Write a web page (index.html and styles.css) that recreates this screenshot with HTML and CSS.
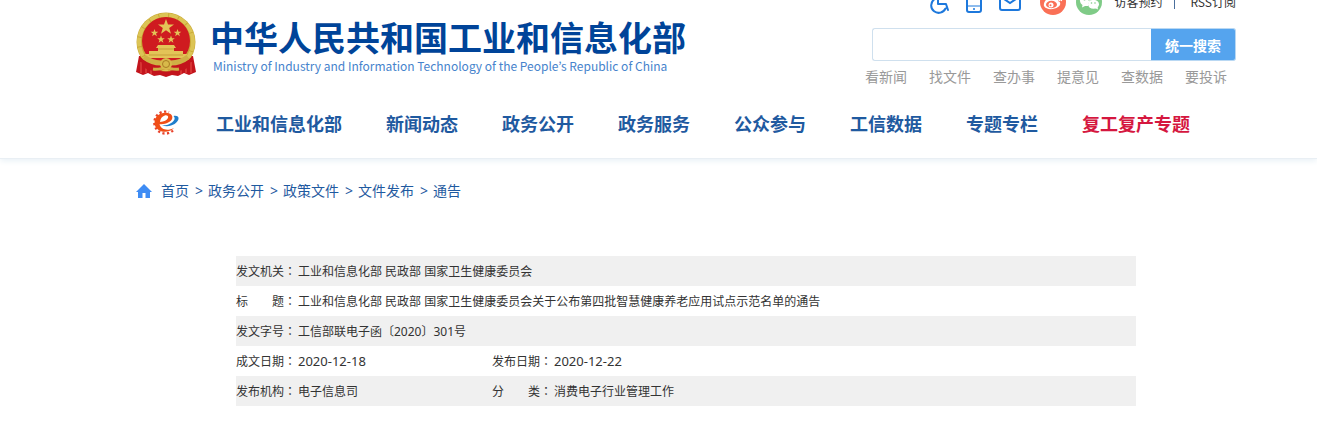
FILE: index.html
```html
<!DOCTYPE html>
<html lang="zh-CN">
<head>
<meta charset="utf-8">
<meta name="viewport" content="width=device-width, initial-scale=1">
<title>中华人民共和国工业和信息化部</title>
<link rel="stylesheet" href="styles.css">
</head>
<body>
<header class="site-header">
  <div class="masthead">
    <a class="brand" href="#">
      <svg class="emblem" viewBox="0 0 60 65" aria-hidden="true">
        <path d="M3 44 L0 60 L7 63 L12 61 L18 64 L24 63 L30 65 L36 63 L42 64 L48 61 L53 63 L60 60 L57 44Z" fill="#c3141c"/>
        <path d="M5 50v11M10 52v9M15 55v7M45 55v7M50 52v9M55 50v11" stroke="#e9544a" stroke-width="1"/>
        <circle cx="30" cy="30" r="29.500" fill="#c9a936"/>
        <circle cx="30" cy="30" r="27" fill="none" stroke="#dcc455" stroke-width="4" stroke-dasharray="9 1"/>
        <circle cx="30" cy="29" r="24" fill="#cf1b20"/>
        <g fill="#e3c457">
          <path d="M30 7l2 5.600h6l-4.800 3.500 1.800 5.700-5-3.500-5 3.500 1.800-5.700L22 12.600h6z"/>
          <path d="M18.500 17l1 2.700h2.800L20 21.400l.9 2.800-2.400-1.700-2.400 1.700.9-2.800-2.300-1.700h2.800zM41.500 17l1 2.700h2.800L43 21.400l.9 2.800-2.400-1.700-2.400 1.700.9-2.800-2.300-1.700h2.800zM25 23.500l1 2.700h2.800l-2.300 1.700.9 2.800-2.400-1.700-2.400 1.700.9-2.800-2.300-1.700H24zM35 23.500l1 2.700h2.800l-2.300 1.700.9 2.800-2.400-1.700-2.400 1.700.9-2.800-2.300-1.700H34z"/>
          <path d="M22 33h16l2 3h-2v3h9v3h4l-1 4H10l-1-4h4v-3h9v-3h-2z"/>
        </g>
        <path d="M13 43h34M22 37h16" stroke="#c79f3a" stroke-width="1"/>
        <path d="M4 45c7 6 16 8 26 5 10 3 19 1 26-5l-3 10c-7 5-16 5-23 2-7 3-16 3-23-2z" fill="#c3141c"/>
        <path d="M8 45c5 4 10 6 17 6M52 45c-5 4-10 6-17 6" fill="none" stroke="#cfb045" stroke-width="5"/>
        <path d="M17 57c5 1 9-1 13-1s8 2 13 1" fill="none" stroke="#cfb045" stroke-width="3"/>
        <circle cx="30" cy="52" r="6" fill="#d8b94a"/>
        <circle cx="30" cy="52" r="3.500" fill="none" stroke="#a97c24"/>
      </svg>
      <span class="brand-text">
        <span class="brand-cn">中华人民共和国工业和信息化部</span>
        <span class="brand-en" lang="en">Ministry of Industry and Information Technology of the People’s Republic of China</span>
      </span>
    </a>
    <div class="tools">
      <div class="utility">
        <a href="#" aria-label="无障碍"><svg width="22" height="24" viewBox="0 0 22 24" fill="none" stroke="#1d78dc" stroke-width="2" stroke-linecap="round" stroke-linejoin="round"><circle cx="9" cy="2" r="1"/><path d="M9 6v8h8l2 6M5 9.500a7.500 7.500 0 1 0 11.500 9"/></svg></a>
        <a class="phone" href="#" aria-label="手机版"><svg width="16" height="22" viewBox="0 0 16 22" fill="none" stroke="#1d78dc" stroke-width="2"><rect x="1" y="1" width="14" height="20" rx="2"/><path d="M1 15h14" stroke-width="1"/><circle cx="8" cy="18" r="1" fill="#1d78dc" stroke="none"/></svg></a>
        <a class="mail" href="#" aria-label="邮箱"><svg width="22" height="18" viewBox="0 0 22 18" fill="none" stroke="#1d78dc" stroke-width="2"><rect x="1" y="1" width="20" height="16" rx="2"/><path d="M5 6l6 4 6-4"/></svg></a>
        <a class="weibo" href="#" aria-label="微博"><svg width="26" height="26" viewBox="0 0 26 26"><circle cx="13" cy="13" r="13" fill="#fa7056"/><path d="M11 8c2-1 4 0 3 2 3-1 5 0 4 2 3 1 3 4 0 6-4 3-12 3-14-1C3 13 7 9 11 8z" fill="#fff"/><ellipse cx="11.500" cy="15.500" rx="5.500" ry="3.700" fill="#fa7056"/><circle cx="11" cy="16" r="2.500" fill="#fff"/><circle cx="10.500" cy="16.300" r="1" fill="#fa7056"/><path d="M16 6c4-1 7 2 5 6M17 9c2 0 3 1 2 3" fill="none" stroke="#fff" stroke-width="1.500"/></svg></a>
        <a class="wechat" href="#" aria-label="微信"><svg width="26" height="26" viewBox="0 0 26 26"><circle cx="13" cy="13" r="13" fill="#7fcb87"/><path d="M10.500 6C6 6 3.500 9 4 12c.2 2 1.300 3 2.500 4L6 18.500l3-1.500h3c0-5 4-7 6-6.500C17 7.500 14 6 10.500 6z" fill="#fff"/><ellipse cx="17.500" cy="15.300" rx="5.500" ry="4.500" fill="#fff"/><path d="M19 19l3 1.500-.6-3z" fill="#fff"/><g fill="#7fcb87"><circle cx="8.500" cy="10.500" r="1"/><circle cx="13" cy="10.500" r="1"/><circle cx="15.500" cy="14" r=".8"/><circle cx="19" cy="14" r=".8"/></g></svg></a>
        <a class="visit" href="#">访客预约</a>
        <span class="divider"></span>
        <a href="#">RSS订阅</a>
      </div>
      <form class="search">
        <input class="search-input" type="text" aria-label="搜索">
        <button class="search-button" type="button">统一搜索</button>
      </form>
      <div class="shortcuts">
        <a href="#">看新闻</a><a href="#">找文件</a><a href="#">查办事</a><a href="#">提意见</a><a href="#">查数据</a><a href="#">要投诉</a>
      </div>
    </div>
  </div>
  <nav class="main-nav">
    <a class="nav-logo" href="#" aria-label="首页"><svg width="28" height="25" viewBox="0 0 28 25" fill="none"><path d="M22 20.500A11 11 0 1 1 18 2.200" stroke="#e8402a" stroke-width="2.400" stroke-dasharray="2.200 2.400"/><path d="M23 18C17 24.500 4 22.500 3.500 13 3.500 5 11 1.500 17 3c4 1 5.500 4 3.500 7-2 2.800-7 4.300-12 4.300 1.500 5.500 8 7 14.500 3.700zM9 11.900c4 0 7-1.700 8-3.900.8-2-1-3-3.200-2.500C11 6.200 9.300 9 9 11.900z" fill="#f04e16" fill-rule="evenodd"/><path d="M11 15.300c5.500.5 10-2 12-5 1-1.600.8-3-.5-4.300 3-.7 5.500.5 5 3-.8 4.500-9 9.300-16.500 6.300z" fill="#1f7ecb"/></svg></a>
    <a href="#">工业和信息化部</a>
    <a href="#">新闻动态</a>
    <a href="#">政务公开</a>
    <a href="#">政务服务</a>
    <a href="#">公众参与</a>
    <a href="#">工信数据</a>
    <a href="#">专题专栏</a>
    <a class="highlight" href="#">复工复产专题</a>
  </nav>
</header>
<main class="content">
  <nav class="breadcrumb" aria-label="当前位置">
    <svg class="home" width="16" height="14" viewBox="0 0 16 14" fill="#3e8cf4" aria-hidden="true"><path d="M8 0l8 8h-2v6H9.500V9h-3v5H2V8H0z"/></svg>
    <a href="#">首页</a><span>&gt;</span><a href="#">政务公开</a><span>&gt;</span><a href="#">政策文件</a><span>&gt;</span><a href="#">文件发布</a><span>&gt;</span><a href="#">通告</a>
  </nav>
  <table class="info">
    <tbody>
      <tr><th scope="row">发文机关<span class="colon" lang="zh-Hant">：</span></th><td colspan="3">工业和信息化部 民政部 国家卫生健康委员会</td></tr>
      <tr><th scope="row">标　　题<span class="colon" lang="zh-Hant">：</span></th><td colspan="3">工业和信息化部 民政部 国家卫生健康委员会关于公布第四批智慧健康养老应用试点示范名单的通告</td></tr>
      <tr><th scope="row">发文字号<span class="colon" lang="zh-Hant">：</span></th><td colspan="3">工信部联电子函〔2020〕301号</td></tr>
      <tr><th scope="row">成文日期<span class="colon" lang="zh-Hant">：</span></th><td class="first date">2020-12-18</td><th scope="row">发布日期<span class="colon" lang="zh-Hant">：</span></th><td class="date">2020-12-22</td></tr>
      <tr><th scope="row">发布机构<span class="colon" lang="zh-Hant">：</span></th><td class="first">电子信息司</td><th scope="row">分　　类<span class="colon" lang="zh-Hant">：</span></th><td>消费电子行业管理工作</td></tr>
    </tbody>
  </table>
</main>
</body>
</html>
```
FILE: styles.css
```css
* {
  box-sizing: border-box;
}

body {
  margin: 0;
  background: #fff;
  color: #333;
  font: 12px/20px "Noto Sans", "Noto Sans CJK SC", sans-serif;
}

a {
  color: inherit;
  text-decoration: none;
}

svg {
  display: block;
}

.site-header {
  padding: 0 81px 0 136px;
  overflow: hidden;
  border-bottom: 1px solid #e9eff4;
  box-shadow: 0 2px 6px #e9f1f6;
}

.masthead {
  display: flex;
  justify-content: space-between;
  align-items: flex-start;
}

.brand {
  display: flex;
  align-items: flex-start;
  gap: 14px;
  padding-top: 12px;
}

.emblem {
  width: 60px;
  height: 65px;
}

.brand-text {
  display: flex;
  flex-direction: column;
  padding-top: 6px;
  white-space: nowrap;
}

.brand-cn {
  color: #004499;
  font: bold 34px/38px "Noto Sans CJK SC", sans-serif;
}

.brand-en {
  padding-left: 3px;
  color: #4683cc;
  font: 12px/20px "Noto Sans CJK KR", sans-serif;
}

.tools {
  width: 372px;
}

.utility {
  display: flex;
  align-items: center;
  justify-content: flex-end;
  height: 28px;
  margin-top: -12px;
  font-family: "Noto Sans CJK SC", sans-serif;
  white-space: nowrap;
}

.phone {
  margin-left: 15px;
}

.mail {
  margin-left: 17px;
}

.weibo {
  margin-left: 19px;
}

.wechat {
  margin-left: 10px;
}

.visit {
  margin-left: 12px;
}

.divider {
  width: 1px;
  height: 14px;
  margin: 0 15px 0 12px;
  background: #4a6f9c;
}

.search {
  display: flex;
  height: 33px;
  margin: 12px 0 0 8px;
}

.search-input {
  flex: 1;
  min-width: 0;
  border: 1px solid #cfe0ee;
  border-right: 0;
  border-radius: 3px 0 0 3px;
  background: #fff;
}

.search-button {
  width: 85px;
  padding: 0;
  border: 1px solid #b9d8f3;
  border-left: 0;
  border-radius: 0 3px 3px 0;
  background: #55a4ee;
  color: #fff;
  font: bold 14px/20px "Noto Sans CJK SC", sans-serif;
}

.shortcuts {
  display: flex;
  gap: 22px;
  margin-top: 6px;
  padding-left: 1px;
  color: #999;
  font-size: 14px;
}

.main-nav {
  display: flex;
  align-items: center;
  gap: 44px;
  height: 71px;
  padding-left: 15px;
  color: #1f5aa0;
  font: bold 18px/24px "Noto Sans CJK SC", sans-serif;
  white-space: nowrap;
}

.nav-logo {
  margin-right: -7px;
}

.main-nav .highlight {
  color: #d5173f;
}

.content {
  padding: 22px 81px 0 136px;
}

.breadcrumb {
  display: flex;
  align-items: center;
  color: #1f5aa0;
  font-size: 14px;
}

.home {
  margin-right: 9px;
}

.breadcrumb span {
  margin: 0 5px 0 6px;
}

.info {
  width: calc(100% - 200px);
  margin: 55px 100px 0;
  border-collapse: collapse;
}

.info tr:nth-child(odd) {
  background: #f0f0f0;
}

.info th,
.info td {
  height: 30px;
  padding: 0;
  font-weight: normal;
  text-align: left;
  white-space: nowrap;
}

.info th {
  width: 62px;
  font-family: "Noto Sans CJK SC", sans-serif;
}

.info td {
  padding-top: 2px;
}

.info .first {
  width: 194px;
}

.info .date {
  padding-top: 0;
  font-size: 13px;
}

.colon {
  font-family: "Noto Sans CJK TC", sans-serif;
}
```
